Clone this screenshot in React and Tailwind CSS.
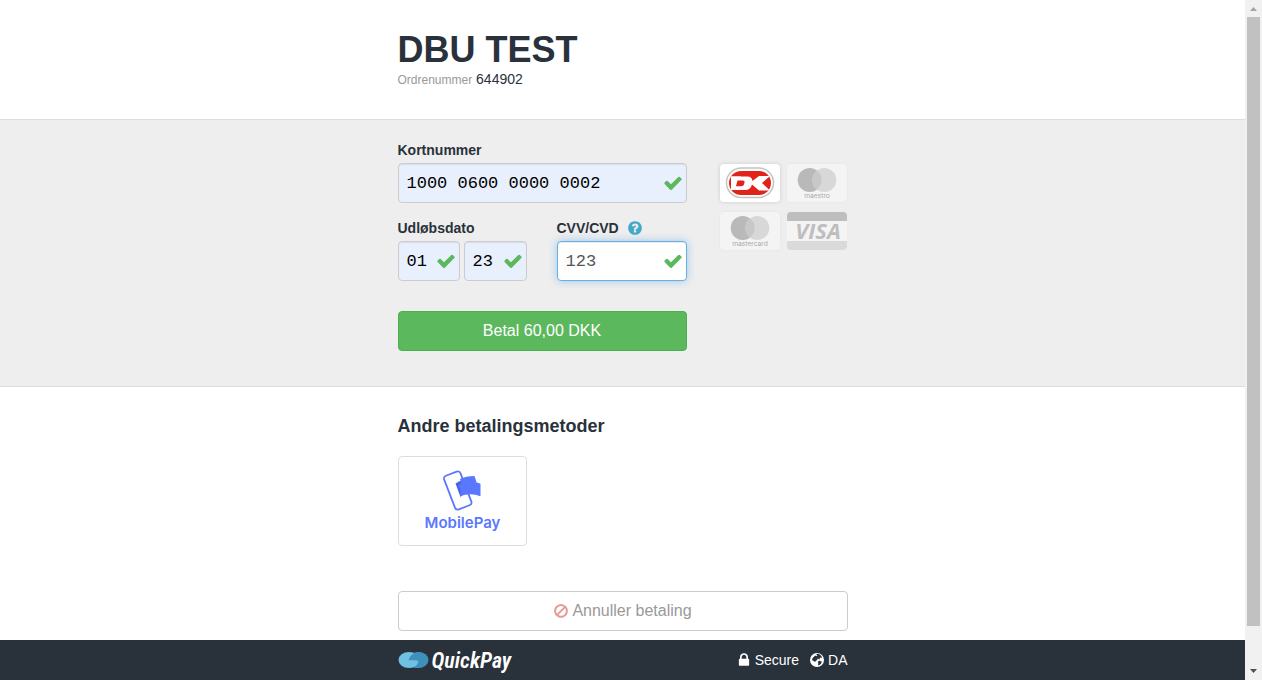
import React, { useState } from 'react';

// Font Awesome 4 glyphs, 1792 grid
const ICONS = {
  check: 'M1671 566q0 40-28 68l-724 724-136 136q-28 28-68 28t-68-28l-136-136-362-362q-28-28-28-68t28-68l136-136q28-28 68-28t68 28l294 295 656-657q28-28 68-28t68 28l136 136q28 28 28 68z',
  lock: 'M640 768h512v-192q0-106-75-181t-181-75-181 75-75 181v192zm832 96v576q0 40-28 68t-68 28h-960q-40 0-68-28t-28-68v-576q0-40 28-68t68-28h32v-192q0-184 132-316t316-132 316 132 132 316v192h32q40 0 68 28t28 68z',
  ban: 'M1440 893q0-161-87-295l-754 753q137 89 297 89 111 0 211.5-43.5t173.5-116.5 116-174.5 43-212.5zm-999 299l755-754q-135-91-300-91-148 0-273 73t-198 199-73 274q0 162 89 299zm1223-299q0 157-61 300t-163.5 246-245 164-298.5 61-298.5-61-245-164-163.5-246-61-300 61-299.5 163.5-245.5 245-164 298.5-61 298.5 61 245 164 163.5 245.5 61 299.5z',
  question: 'M1024 1376v-192q0-14-9-23t-23-9h-192q-14 0-23 9t-9 23v192q0 14 9 23t23 9h192q14 0 23-9t9-23zm256-672q0-88-55.5-163t-138.5-116-170-41q-243 0-371 213-15 24 8 42l132 100q7 6 19 6 16 0 25-12 53-68 86-92 34-24 86-24 48 0 85.5 26t37.5 59q0 38-20 61t-68 45q-63 28-115.5 86.5t-52.5 125.5v36q0 14 9 23t23 9h192q14 0 23-9t9-23q0-19 21.5-49.5t54.5-49.5q32-18 49-28.5t46-35 44.5-48 28-60.5 12.5-81zm384 192q0 209-103 385.5t-279.5 279.5-385.5 103-385.5-103-279.5-279.5-103-385.5 103-385.5 279.5-279.5 385.5-103 385.5 103 279.5 279.5 103 385.5z',
};

const Icon = ({ name, className }) => (
  <svg viewBox="0 0 1792 1792" fill="currentColor" aria-hidden="true" className={className}>
    <path d={ICONS[name]} />
  </svg>
);

const GlobeIcon = () => (
  <svg viewBox="0 0 16 16" aria-hidden="true" className="h-4 w-4">
    <circle cx="8" cy="8" r="7" fill="#fff" />
    <path
      fill="#29313b"
      d="M7.2 2.2l1.7-.5 1.9.8 1.3 1.2.9 1.5-.6.8-1-.5-.9.6.5 1-.9.3-1-.8-.9.6.2.9-1.2.4-.7 1.1-.9.2-.9-.7-1-.4-.6-1.1.4-1.3 1.2-1.4 1-1 1.300-.4.5.7.9-.2zM9.300 9.200l1.500-.4 1.200.6.900.2-.5 1.500-1.200 1.300-1.600 1-.6-1.200.4-1.100-.6-.8z"
    />
  </svg>
);

const Field = ({ id, label, value, onChange, className, active }) => (
  <div className={`relative ${className}`}>
    <input
      id={id}
      aria-label={label}
      type="text"
      inputMode="numeric"
      value={value}
      onChange={(e) => onChange(e.target.value)}
      className={`block h-10 w-full rounded-sm border pl-2 pr-6 font-['Liberation_Mono',monospace] text-[17px] outline-none ${
        active
          ? 'border-[#66afe9] bg-white text-[#555] shadow-[inset_0_1px_1px_rgba(0,0,0,0.08),0_0_8px_rgba(102,175,233,0.6)]'
          : 'border-[#ccc] bg-[#e8f0fe] text-black shadow-[inset_0_1px_1px_rgba(0,0,0,0.08)]'
      }`}
    />
    <Icon name="check" className="pointer-events-none absolute right-1 top-2.5 h-5 w-5 text-[#5cb85c]" />
  </div>
);

const DankortCard = () => (
  <svg viewBox="0 0 60 38" role="img" aria-label="Dankort" className="h-[38px] w-[60px] rounded bg-white shadow-[0_0_4px_rgba(0,0,0,0.15)]">
    <rect x="6.5" y="4" width="47" height="29.5" rx="14.7" fill="#fff" stroke="#c4c4c4" strokeWidth="1.5" />
    <clipPath id="dk">
      <rect x="9" y="7" width="42" height="24" rx="12" />
    </clipPath>
    <g clipPath="url(#dk)">
      <rect x="9" y="7" width="42" height="24" fill="#e2231a" />
      <path fill="#fff" d="M8 12.500h19.500q4.500 0 5 4.500l6.500-5h11l-8 7 8 7.500h-11l-7-6q-1.500 5.500-7 5.500H8.500l4-2.500 2.500-8.500-1.500-1.500H8z" />
      <path fill="#fff" d="M11 12.500h10v13.500H11z" />
      <path fill="#e2231a" d="M17.500 16.500h5.500q2 0 1.500 2l-.5 1.800q-.6 2-2.700 2h-5.300z" />
    </g>
  </svg>
);

const CirclesCard = ({ name }) => (
  <svg viewBox="0 0 60 38" role="img" aria-label={name} className="h-[38px] w-[60px] rounded bg-[#f4f4f4] shadow-[0_0_3px_rgba(0,0,0,0.05)]">
    <circle cx="22.700" cy="16" r="12" fill="#b9b9b9" />
    <circle cx="37.300" cy="16" r="12" fill="#d8d8d8" />
    <path fill="#c8c8c8" d="M30 6.500a12 12 0 0 1 0 19 12 12 0 0 1 0-19z" />
    <text x="30" y="34" textAnchor="middle" fontSize="6.7" fontFamily="Inter, sans-serif" fill="#aaa">
      {name}
    </text>
  </svg>
);

const VisaCard = () => (
  <svg viewBox="0 0 60 38" role="img" aria-label="Visa" className="h-[38px] w-[60px] rounded bg-[#f4f4f4]">
    <path fill="#bebebe" d="M0 0h60v9H0z" />
    <path fill="#dadada" d="M0 29h60v9H0z" />
    <text x="31" y="26.700" textAnchor="middle" fontSize="22" fontWeight="700" fontStyle="italic" fontFamily="'Open Sans', sans-serif" fill="#bebebe">
      VISA
    </text>
  </svg>
);

const MobilePayLogo = () => (
  <svg viewBox="0 0 80 64" role="img" aria-label="MobilePay" className="h-16 w-20">
    <rect x="27" y="3.500" width="17.500" height="36" rx="3" fill="none" stroke="#5a78ff" strokeWidth="1.800" transform="rotate(-21 35.700 21.500)" />
    <path fill="#4a63e0" d="M33.500 14.500q8-5 18-5.500l2 5-15 14z" />
    <path fill="#5a78ff" d="M38 10q6-3 14.500-3l2 6q-9 0-15 3z" />
    <path fill="#5a78ff" d="M36.500 16q8-3.500 14-3.200 4 0 8 2v12.500q-5-2-10-2-5.500 0-10 1.700.8-6-2-11z" />
    <text x="40.500" y="58.500" textAnchor="middle" fontSize="15" fontWeight="600" fontFamily="Inter, sans-serif" fill="#5a78ff">
      MobilePay
    </text>
  </svg>
);

const QuickPayLogo = () => (
  <svg viewBox="0 0 114 30" role="img" aria-label="QuickPay" className="h-[30px] w-[114px] overflow-visible">
    <ellipse cx="20.500" cy="15" rx="10" ry="8" fill="#3e8fba" />
    <ellipse cx="11" cy="15" rx="10.500" ry="8" fill="#6fc1e2" />
    <path fill="#3e8fba" d="M10.500 15.500q1-5 6-7.500 3-1.300 6-.8l5 3.200v9l-6 3.500h-5.500q3.500-2 4-5.300h-2v-2.100z" />
    <path fill="#6fc1e2" d="M9 15.500h11.200q-.6 4.500-5.500 7l-5-1z" />
    <text x="33.500" y="22.500" fontSize="22" fontWeight="600" fontStyle="italic" fontFamily="'Liberation Sans Narrow', 'Roboto Condensed', 'Open Sans Condensed', Lato, sans-serif" fill="#fff">
      QuickPay
    </text>
  </svg>
);

const Scrollbar = () => (
  <div className="flex w-[17px] shrink-0 flex-col items-center bg-[#f1f1f1]" aria-hidden="true">
    <svg viewBox="0 0 17 17" className="h-[17px] w-[17px]">
      <path fill="#a3a3a3" d="M5 11h7L8.500 7z" />
    </svg>
    <div className="w-[13px] flex-1 bg-[#c1c1c1]" />
    <svg viewBox="0 0 17 17" className="mt-[37px] h-[17px] w-[17px]">
      <path fill="#505050" d="M5 6h7L8.500 10z" />
    </svg>
  </div>
);

const App = () => {
  const [card, setCard] = useState('1000 0600 0000 0002');
  const [month, setMonth] = useState('01');
  const [year, setYear] = useState('23');
  const [cvv, setCvv] = useState('123');

  return (
    <div className="flex min-h-screen bg-white font-['Liberation_Sans',Arial,sans-serif] text-sm leading-5 text-[#29313b]">
      <div className="flex min-w-0 flex-1 flex-col">
        <header className="border-b border-[#ddd] py-[30px]">
          <div className="mx-auto w-full max-w-[450px]">
            <h1 className="text-4xl leading-[39px] font-bold">DBU TEST</h1>
            <p>
              <small className="text-xs text-[#999]">Ordrenummer</small> 644902
            </p>
          </div>
        </header>

        <main className="flex flex-1 flex-col">
          <section className="border-b border-[#ddd] bg-[#eee] pb-[35px] pt-5">
            <div className="mx-auto flex w-full max-w-[450px] gap-[33px]">
              <form className="w-[289px] shrink-0" onSubmit={(e) => e.preventDefault()}>
                <label htmlFor="cardnumber" className="mb-[3px] block font-bold">Kortnummer</label>
                <Field id="cardnumber" label="Kortnummer" value={card} onChange={setCard} className="w-full" />
                <div className="mt-[15px] flex justify-between">
                  <div>
                    <label htmlFor="month" className="mb-[3px] block font-bold">Udløbsdato</label>
                    <div className="flex gap-1">
                      <Field id="month" label="Måned" value={month} onChange={setMonth} className="w-[62px]" />
                      <Field id="year" label="År" value={year} onChange={setYear} className="w-[63px]" />
                    </div>
                  </div>
                  <div>
                    <div className="mb-[3px] flex items-center gap-2">
                      <label htmlFor="cvv" className="font-bold">CVV/CVD</label>
                      <button type="button" aria-label="Hjælp" className="text-[#44a9c9]">
                        <Icon name="question" className="h-4 w-4" />
                      </button>
                    </div>
                    <Field id="cvv" label="CVV/CVD" value={cvv} onChange={setCvv} className="w-[130px]" active />
                  </div>
                </div>
                <button type="submit" className="mt-[30px] h-10 w-full rounded-sm border border-[#4cae4c] bg-[#5cb85c] text-base text-white">
                  Betal 60,00 DKK
                </button>
              </form>
              <div className="mt-6 grid grid-cols-[60px_60px] content-start gap-x-[7px] gap-y-2.5">
                <DankortCard />
                <CirclesCard name="maestro" />
                <CirclesCard name="mastercard" />
                <VisaCard />
              </div>
            </div>
          </section>

          <section className="mx-auto w-full max-w-[450px] pb-[9px] pt-[29px]">
            <h2 className="text-lg leading-5 font-bold">Andre betalingsmetoder</h2>
            <button type="button" className="mt-5 flex h-[90px] w-[129px] items-center justify-center rounded-sm border border-[#ddd] bg-white">
              <MobilePayLogo />
            </button>
            <button type="button" className="mt-[45px] flex h-10 w-full items-center justify-center gap-[3px] rounded-sm border border-[#ccc] bg-white text-base text-[#999]">
              <Icon name="ban" className="h-4 w-4 text-[#e79a98]" />
              Annuller betaling
            </button>
          </section>
        </main>

        <footer className="bg-[#29313b] text-white">
          <div className="mx-auto flex h-10 w-full max-w-[450px] items-center justify-between">
            <a href="#quickpay"><QuickPayLogo /></a>
            <div className="flex gap-2.5">
              <a href="#secure" className="flex items-center gap-[3px]">
                <Icon name="lock" className="h-4 w-4" />
                Secure
              </a>
              <a href="#language" className="flex items-center gap-[3px]">
                <GlobeIcon />
                DA
              </a>
            </div>
          </div>
        </footer>
      </div>
      <Scrollbar />
    </div>
  );
};

export default App;
